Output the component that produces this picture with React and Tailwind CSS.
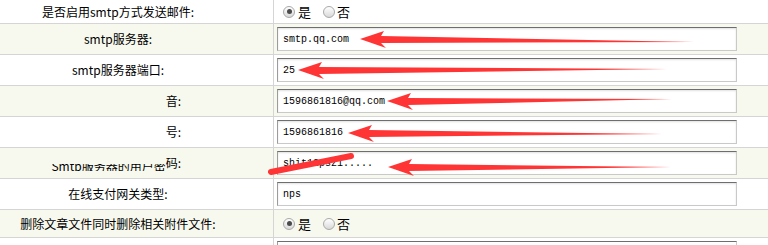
import React from 'react';

const labelFont = { fontFamily: '"Noto Sans CJK SC", "Liberation Sans", sans-serif' };

const Radio = ({ checked }) => (
  <span className="relative inline-flex items-center justify-center w-[12px] h-[12px] rounded-full border border-[#a9a9a9] bg-gradient-to-b from-[#ffffff] to-[#d9d9d9]">
    {checked && <span className="w-[5px] h-[5px] rounded-full bg-[#4a4a4a]" />}
  </span>
);

const RadioPair = () => (
  <div className="flex items-center pl-[9px] text-[13px] text-black" style={labelFont}>
    <Radio checked />
    <span className="ml-[3px] mr-[12px]">是</span>
    <Radio />
    <span className="ml-[2px]">否</span>
  </div>
);

const TextBox = ({ value }) => (
  <div className="ml-[3px] w-[460px] h-[24px] flex items-center bg-white border border-t-[#6e6e6e] border-l-[#9c9c9c] border-r-[#c9c9c9] border-b-[#c9c9c9] shadow-[inset_0_1px_2px_rgba(0,0,0,0.12)] pl-[5px] font-['Liberation_Mono',monospace] text-[10px] text-black">
    {value}
  </div>
);

const Row = ({ bg, h, label, children }) => (
  <div className={`grid grid-cols-[274px_1fr] border-b border-[#d5d5d5] ${bg} ${h}`}>
    <div className="border-r border-[#d5d5d5] flex items-center">{label}</div>
    <div className="flex items-center">{children}</div>
  </div>
);

const Centered = ({ text }) => (
  <div className="w-full text-center pr-[37px] text-[12px] text-black" style={labelFont}>
    {text}
  </div>
);

const RightAt = ({ children }) => (
  <div className="w-full flex justify-end pr-[92px] text-[12px] text-black" style={labelFont}>
    {children}
  </div>
);

const Arrow = ({ x0, y0, x1, y1 }) => {
  const d = `M${x0} ${y0} L${x0 + 24} ${y0 - 8} L${x0 + 21} ${y0 - 3} L${x1} ${y1} L${x0 + 21} ${y0 + 4} L${x0 + 26} ${y0 + 9} Z`;
  return <path d={d} fill="#ff3535" />;
};

export default function App() {
  const beige = 'bg-[#f8f9ee]';
  return (
    <div className="relative w-[768px] h-[245px] overflow-hidden bg-white">
      <Row bg="bg-white" h="h-[24px]" label={<Centered text="是否启用smtp方式发送邮件:" />}>
        <RadioPair />
      </Row>
      <Row bg={beige} h="h-[31px]" label={<Centered text="smtp服务器:" />}>
        <TextBox value="smtp.qq.com" />
      </Row>
      <Row bg="bg-white" h="h-[31px]" label={<Centered text="smtp服务器端口:" />}>
        <TextBox value="25" />
      </Row>
      <Row bg={beige} h="h-[31px]" label={<RightAt>音:</RightAt>}>
        <TextBox value="1596861816@qq.com" />
      </Row>
      <Row bg="bg-white" h="h-[31px]" label={<RightAt>号:</RightAt>}>
        <TextBox value="1596861816" />
      </Row>
      <Row
        bg={beige}
        h="h-[31px]"
        label={
          <RightAt>
            <span className="flex items-end">
              <span className="h-[7px] overflow-hidden flex items-end leading-[16px] mb-[1px]">
                <span className="-mb-[3px]">Smtp服务器的用户密</span>
              </span>
              <span>码:</span>
            </span>
          </RightAt>
        }
      >
        <TextBox value="shit12psz1....." />
      </Row>
      <Row bg="bg-white" h="h-[31px]" label={<Centered text="在线支付网关类型:" />}>
        <TextBox value="nps" />
      </Row>
      <Row bg={beige} h="h-[28px]" label={<Centered text="删除文章文件同时删除相关附件文件:" />}>
        <RadioPair />
      </Row>
      <div className="grid grid-cols-[274px_1fr] bg-white h-[20px]">
        <div className="border-r border-[#d5d5d5]" />
        <div className="pt-[3px]">
          <div className="ml-[3px] w-[460px] h-[20px] border border-t-[#6e6e6e] border-l-[#9c9c9c] border-r-[#c9c9c9] bg-white" />
        </div>
      </div>

      <svg className="absolute inset-0 pointer-events-none" width="768" height="245">
        <Arrow x0={360} y0={39} x1={694} y1={42} />
        <Arrow x0={298} y0={70} x1={667} y1={69} />
        <Arrow x0={387} y0={101} x1={672} y1={99} />
        <Arrow x0={348} y0={133} x1={662} y1={134} />
        <Arrow x0={388} y0={167} x1={671} y1={167} />
        <line x1="271" y1="172" x2="351" y2="156" stroke="#ff3535" strokeWidth="6" strokeLinecap="round" />
      </svg>
    </div>
  );
}
